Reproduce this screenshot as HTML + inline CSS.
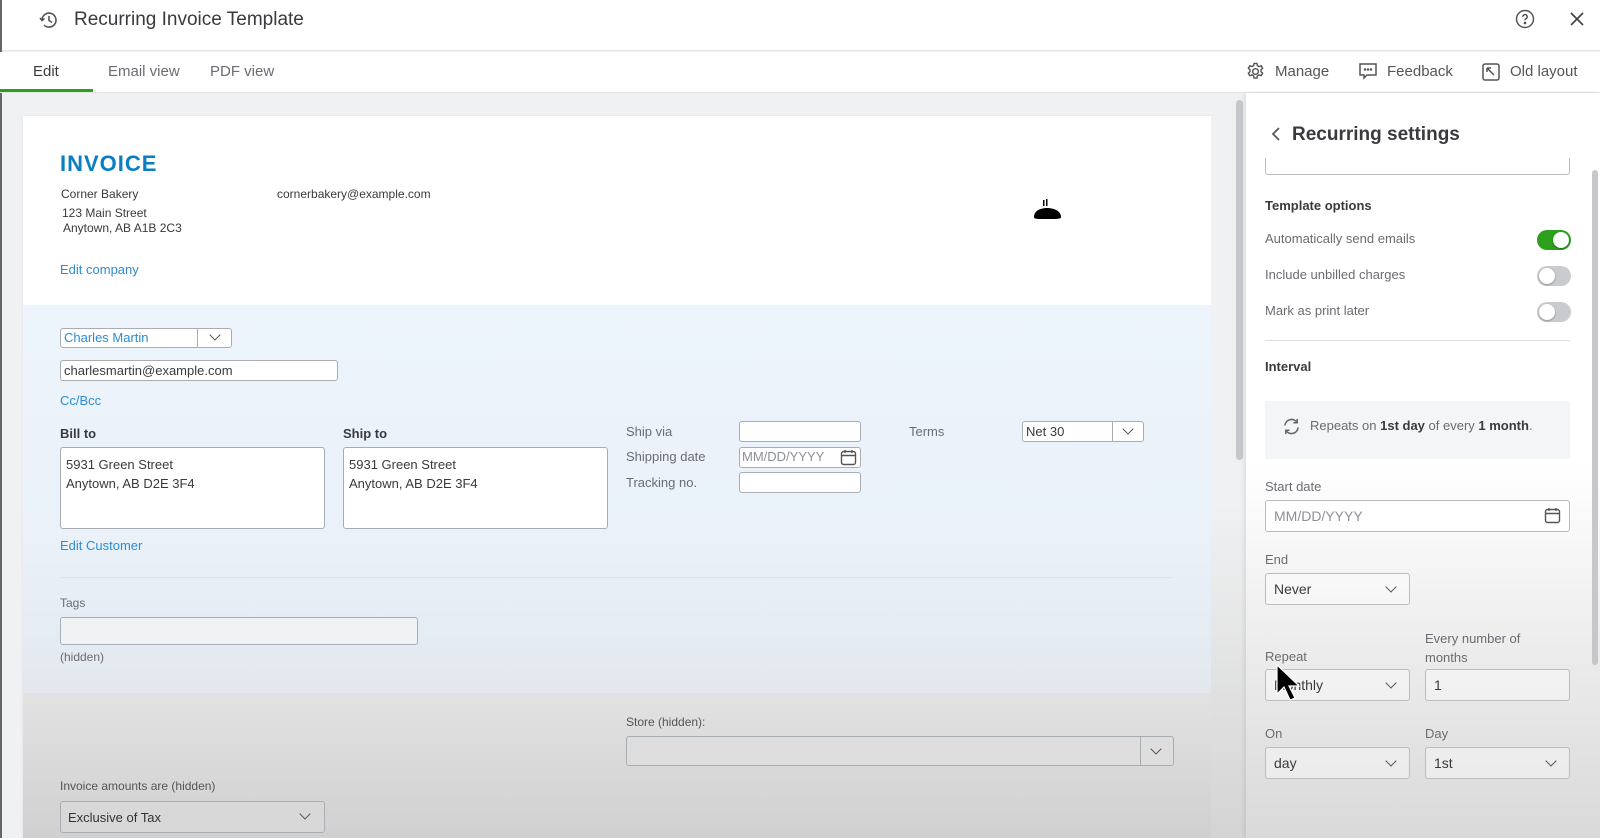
<!DOCTYPE html>
<html><head><meta charset="utf-8"><style>
*{box-sizing:border-box;margin:0;padding:0}
body{width:1600px;height:838px;overflow:hidden;position:relative;font-family:"Liberation Sans",sans-serif;background:#f0f1f2;color:#393a3d}
.a{position:absolute}
.t{position:absolute;white-space:nowrap}
.inp{position:absolute;background:#fff;border:1px solid #a8adb3;border-radius:3px}
.chev{position:absolute;width:8px;height:8px;border-right:1.6px solid #555;border-bottom:1.6px solid #555;transform:rotate(45deg)}
.sel{position:absolute;border:1px solid #b9bcc0;border-radius:3px;background:rgba(255,255,255,.4)}
.lbl{position:absolute;white-space:nowrap;font-size:13px;color:#6b6c72}
.tg{position:absolute;width:34px;height:20px;border-radius:10px;background:#c9cbcf}
.tg i{position:absolute;top:2px;left:2px;width:16px;height:16px;border-radius:50%;background:#fff;box-shadow:0 1px 2px rgba(0,0,0,.3)}
</style></head><body>
<!-- header -->
<div class="a" style="left:0;top:0;width:1600px;height:51px;background:#fff;border-bottom:1px solid #e4e5e7"></div>
<div class="a" style="left:0;top:0;width:2px;height:838px;background:#666"></div>
<svg class="a" style="left:38px;top:9px" width="22" height="22" viewBox="0 0 22 22" fill="none" stroke="#555" stroke-width="1.6"><path d="M4 11a7 7 0 1 1 2 5"/><path d="M2 9l2 2.5 2.5-2"/><path d="M11 7v4.5l3 2"/></svg>
<div class="t" style="left:74px;top:9px;font-size:19px;color:#393a3d">Recurring Invoice Template</div>
<svg class="a" style="left:1515px;top:9px" width="20" height="20" viewBox="0 0 20 20" fill="none" stroke="#555" stroke-width="1.5"><circle cx="10" cy="10" r="8.5"/><path d="M7.8 7.8a2.2 2.2 0 1 1 3 2c-.7.3-.8.8-.8 1.5"/><circle cx="10" cy="14" r=".6" fill="#555"/></svg>
<svg class="a" style="left:1569px;top:11px" width="16" height="16" viewBox="0 0 16 16" stroke="#444" stroke-width="1.7"><path d="M2 2l12 12M14 2L2 14"/></svg>
<!-- tabs -->
<div class="a" style="left:0;top:52px;width:1600px;height:41px;background:#fff;border-bottom:1px solid #e4e5e7"></div>
<div class="t" style="left:33px;top:63px;font-size:15px;color:#393a3d">Edit</div>
<div class="t" style="left:108px;top:63px;font-size:15px;color:#6b6c72">Email view</div>
<div class="t" style="left:210px;top:63px;font-size:15px;color:#6b6c72">PDF view</div>
<div class="a" style="left:0;top:89px;width:93px;height:3px;background:#2ca01c"></div>
<svg class="a" style="left:1246px;top:62px" width="19" height="19" viewBox="0 0 20 20" fill="none" stroke="#555" stroke-width="1.5"><circle cx="10" cy="10" r="3"/><path d="M8.5 1.5h3l.5 2.3 1.8 1 2.2-.8 1.5 2.6-1.7 1.6v2l1.7 1.6-1.5 2.6-2.2-.8-1.8 1-.5 2.3h-3l-.5-2.3-1.8-1-2.2.8-1.5-2.6 1.7-1.6v-2L2.5 6.6 4 4l2.2.8 1.8-1z"/></svg>
<div class="t" style="left:1275px;top:63px;font-size:15px;color:#555">Manage</div>
<svg class="a" style="left:1358px;top:62px" width="20" height="19" viewBox="0 0 20 19" fill="none" stroke="#555" stroke-width="1.5"><path d="M2 2h16v11H9l-3 3v-3H2z"/><circle cx="7" cy="7.5" r=".5" fill="#555"/><circle cx="10" cy="7.5" r=".5" fill="#555"/><circle cx="13" cy="7.5" r=".5" fill="#555"/></svg>
<div class="t" style="left:1387px;top:63px;font-size:15px;color:#555">Feedback</div>
<svg class="a" style="left:1482px;top:63px" width="18" height="18" viewBox="0 0 18 18" fill="none" stroke="#555" stroke-width="1.5"><rect x="1" y="1" width="16" height="16" rx="2"/><path d="M5 5l7 7M5 5h4M5 5v4"/></svg>
<div class="t" style="left:1510px;top:63px;font-size:15px;color:#555">Old layout</div>
<!-- invoice card -->
<div class="a" style="left:23px;top:116px;width:1188px;height:722px;background:#fff;box-shadow:0 0 3px rgba(0,0,0,.08)"></div>
<div class="a" style="left:23px;top:305px;width:1188px;height:388px;background:linear-gradient(#edf4fc,#eaf1f9 60%,#e2e8ee)"></div>
<div class="a" style="left:23px;top:693px;width:1188px;height:145px;background:linear-gradient(#e2e2e2,#d0d0d0)"></div>
<div class="a" style="left:1211px;top:93px;width:35px;height:745px;background:linear-gradient(#f0f1f2,#f0f1f2 55%,#d4d4d4)"></div>
<div class="a" style="left:1236px;top:100px;width:7px;height:360px;border-radius:4px;background:#c5c7ca"></div>
<div class="t" style="left:60px;top:151px;font-size:22px;font-weight:bold;color:#0a7ec2;letter-spacing:1px">INVOICE</div>
<div class="t" style="left:61px;top:187px;font-size:12px;color:#393a3d">Corner Bakery</div>
<div class="t" style="left:277px;top:187px;font-size:12px;color:#393a3d">cornerbakery@example.com</div>
<div class="t" style="left:62px;top:206px;font-size:12px;color:#393a3d">123 Main Street</div>
<div class="t" style="left:63px;top:221px;font-size:12px;color:#393a3d">Anytown, AB A1B 2C3</div>
<div class="t" style="left:60px;top:262px;font-size:13px;color:#2d8dd2">Edit company</div>
<svg class="a" style="left:1033px;top:198px" width="30" height="24" viewBox="0 0 30 24"><rect x="10" y="2" width="1.5" height="6"/><rect x="13" y="1" width="1.5" height="7"/><path d="M1 19c0-6 6-9 13-9s14 3 14 9c0 2-3 2-14 2S1 21 1 19z"/></svg>
<!-- customer -->
<div class="inp" style="left:60px;top:328px;width:172px;height:20px"></div>
<div class="a" style="left:197px;top:329px;width:1px;height:18px;background:#a8adb3"></div>
<div class="t" style="left:64px;top:330px;font-size:13px;color:#2d8dd2">Charles Martin</div>
<div class="chev" style="left:211px;top:331px"></div>
<div class="inp" style="left:60px;top:360px;width:278px;height:21px"></div>
<div class="t" style="left:64px;top:363px;font-size:13px;color:#393a3d">charlesmartin@example.com</div>
<div class="t" style="left:60px;top:393px;font-size:13px;color:#2d8dd2">Cc/Bcc</div>
<div class="t" style="left:60px;top:426px;font-size:13px;font-weight:bold;color:#393a3d">Bill to</div>
<div class="t" style="left:343px;top:426px;font-size:13px;font-weight:bold;color:#393a3d">Ship to</div>
<div class="inp" style="left:60px;top:447px;width:265px;height:82px"></div>
<div class="inp" style="left:343px;top:447px;width:265px;height:82px"></div>
<div class="t" style="left:66px;top:455px;font-size:13px;line-height:19px;color:#393a3d">5931 Green Street<br>Anytown, AB D2E 3F4</div>
<div class="t" style="left:349px;top:455px;font-size:13px;line-height:19px;color:#393a3d">5931 Green Street<br>Anytown, AB D2E 3F4</div>
<div class="t" style="left:626px;top:424px;font-size:13px;color:#6b6c72">Ship via</div>
<div class="t" style="left:626px;top:449px;font-size:13px;color:#6b6c72">Shipping date</div>
<div class="t" style="left:626px;top:475px;font-size:13px;color:#6b6c72">Tracking no.</div>
<div class="inp" style="left:739px;top:421px;width:122px;height:21px"></div>
<div class="inp" style="left:739px;top:447px;width:122px;height:21px"></div>
<div class="t" style="left:742px;top:449px;font-size:13px;color:#8d9096">MM/DD/YYYY</div>
<svg class="a" style="left:840px;top:449px" width="17" height="17" viewBox="0 0 17 17" fill="none" stroke="#555" stroke-width="1.4"><rect x="1.5" y="2.5" width="14" height="13" rx="2"/><path d="M1.5 6.5h14M5 1v3M12 1v3"/></svg>
<div class="inp" style="left:739px;top:472px;width:122px;height:21px"></div>
<div class="t" style="left:909px;top:424px;font-size:13px;color:#6b6c72">Terms</div>
<div class="inp" style="left:1022px;top:421px;width:122px;height:21px"></div>
<div class="a" style="left:1112px;top:422px;width:1px;height:19px;background:#a8adb3"></div>
<div class="t" style="left:1026px;top:424px;font-size:13px;color:#393a3d">Net 30</div>
<div class="chev" style="left:1124px;top:425px"></div>
<div class="t" style="left:60px;top:538px;font-size:13px;color:#2d8dd2">Edit Customer</div>
<div class="a" style="left:60px;top:577px;width:1113px;height:1px;background:#dde3ea"></div>
<div class="t" style="left:60px;top:596px;font-size:12px;color:#6b6c72">Tags</div>
<div class="inp" style="left:60px;top:617px;width:358px;height:28px;background:#f1f2f3"></div>
<div class="t" style="left:60px;top:650px;font-size:12px;color:#6b6c72">(hidden)</div>
<div class="t" style="left:626px;top:715px;font-size:12px;color:#555">Store (hidden):</div>
<div class="inp" style="left:626px;top:736px;width:548px;height:30px;background:#dedede"></div>
<div class="a" style="left:1140px;top:737px;width:1px;height:28px;background:#a8adb3"></div>
<div class="chev" style="left:1152px;top:745px"></div>
<div class="t" style="left:60px;top:779px;font-size:12px;color:#555">Invoice amounts are (hidden)</div>
<div class="inp" style="left:60px;top:801px;width:265px;height:32px;background:#d8d8d8"></div>
<div class="t" style="left:68px;top:810px;font-size:13px;color:#333">Exclusive of Tax</div>
<div class="chev" style="left:301px;top:810px"></div>
<!-- right panel -->
<div class="a" style="left:1246px;top:93px;width:354px;height:745px;background:linear-gradient(#fff,#fff 50%,#d9d9d9);box-shadow:-2px 0 4px rgba(0,0,0,.08)"></div>
<div class="a" style="left:1592px;top:170px;width:6px;height:495px;border-radius:3px;background:#c5c7ca"></div>
<svg class="a" style="left:1270px;top:126px" width="12" height="16" viewBox="0 0 12 16" fill="none" stroke="#555" stroke-width="1.7"><path d="M9 2L3 8l6 6"/></svg>
<div class="t" style="left:1292px;top:124px;font-size:19px;font-weight:bold;color:#393a3d;font-weight:600">Recurring settings</div>
<div class="a" style="left:1265px;top:158px;width:305px;height:17px;border:1px solid #bbb;border-top:none;border-radius:0 0 3px 3px"></div>
<div class="t" style="left:1265px;top:198px;font-size:13px;font-weight:bold;color:#393a3d">Template options</div>
<div class="t" style="left:1265px;top:231px;font-size:13px;color:#6b6c72">Automatically send emails</div>
<div class="t" style="left:1265px;top:267px;font-size:13px;color:#6b6c72">Include unbilled charges</div>
<div class="t" style="left:1265px;top:303px;font-size:13px;color:#6b6c72">Mark as print later</div>
<div class="tg" style="left:1537px;top:230px;background:#2ca01c"><i style="left:16px"></i></div>
<div class="tg" style="left:1537px;top:266px"><i></i></div>
<div class="tg" style="left:1537px;top:302px"><i></i></div>
<div class="a" style="left:1265px;top:340px;width:305px;height:1px;background:#dcdddf"></div>
<div class="t" style="left:1265px;top:359px;font-size:13px;font-weight:bold;color:#393a3d">Interval</div>
<div class="a" style="left:1265px;top:401px;width:305px;height:58px;background:#f4f5f7"></div>
<svg class="a" style="left:1282px;top:417px" width="19" height="19" viewBox="0 0 20 20" fill="none" stroke="#666" stroke-width="1.6"><path d="M3 9a7 7 0 0 1 13-3M17 11a7 7 0 0 1-13 3"/><path d="M16 2v4h-4M4 18v-4h4"/></svg>
<div class="t" style="left:1310px;top:418px;font-size:13px;color:#6b6c72">Repeats on <b style="color:#393a3d">1st day</b> of every <b style="color:#393a3d">1 month</b>.</div>
<div class="lbl" style="left:1265px;top:479px">Start date</div>
<div class="sel" style="left:1265px;top:500px;width:305px;height:32px;background:#fff"></div>
<div class="t" style="left:1274px;top:508px;font-size:14px;color:#8d9096">MM/DD/YYYY</div>
<svg class="a" style="left:1544px;top:507px" width="17" height="17" viewBox="0 0 17 17" fill="none" stroke="#555" stroke-width="1.4"><rect x="1.5" y="2.5" width="14" height="13" rx="2"/><path d="M1.5 6.5h14M5 1v3M12 1v3"/></svg>
<div class="lbl" style="left:1265px;top:552px">End</div>
<div class="sel" style="left:1265px;top:573px;width:145px;height:32px"></div>
<div class="t" style="left:1274px;top:581px;font-size:14px;color:#393a3d">Never</div>
<div class="chev" style="left:1387px;top:583px"></div>
<div class="lbl" style="left:1425px;top:629px;line-height:19px">Every number of<br>months</div>
<div class="lbl" style="left:1265px;top:649px">Repeat</div>
<div class="sel" style="left:1265px;top:669px;width:145px;height:32px"></div>
<div class="t" style="left:1274px;top:677px;font-size:14px;color:#393a3d">Monthly</div>
<div class="chev" style="left:1387px;top:679px"></div>
<div class="sel" style="left:1425px;top:669px;width:145px;height:32px"></div>
<div class="t" style="left:1434px;top:677px;font-size:14px;color:#393a3d">1</div>
<div class="lbl" style="left:1265px;top:726px">On</div>
<div class="lbl" style="left:1425px;top:726px">Day</div>
<div class="sel" style="left:1265px;top:747px;width:145px;height:32px"></div>
<div class="t" style="left:1274px;top:755px;font-size:14px;color:#393a3d">day</div>
<div class="chev" style="left:1387px;top:757px"></div>
<div class="sel" style="left:1425px;top:747px;width:145px;height:32px"></div>
<div class="t" style="left:1434px;top:755px;font-size:14px;color:#393a3d">1st</div>
<div class="chev" style="left:1547px;top:757px"></div>
<!-- cursor -->
<svg class="a" style="left:1276px;top:664px" width="32" height="40" viewBox="0 0 32 40"><path d="M1 1v29l7-7 6 13 5-2-6-12h10z" fill="#000" stroke="#fff" stroke-width="1.2"/></svg>
</body></html>
